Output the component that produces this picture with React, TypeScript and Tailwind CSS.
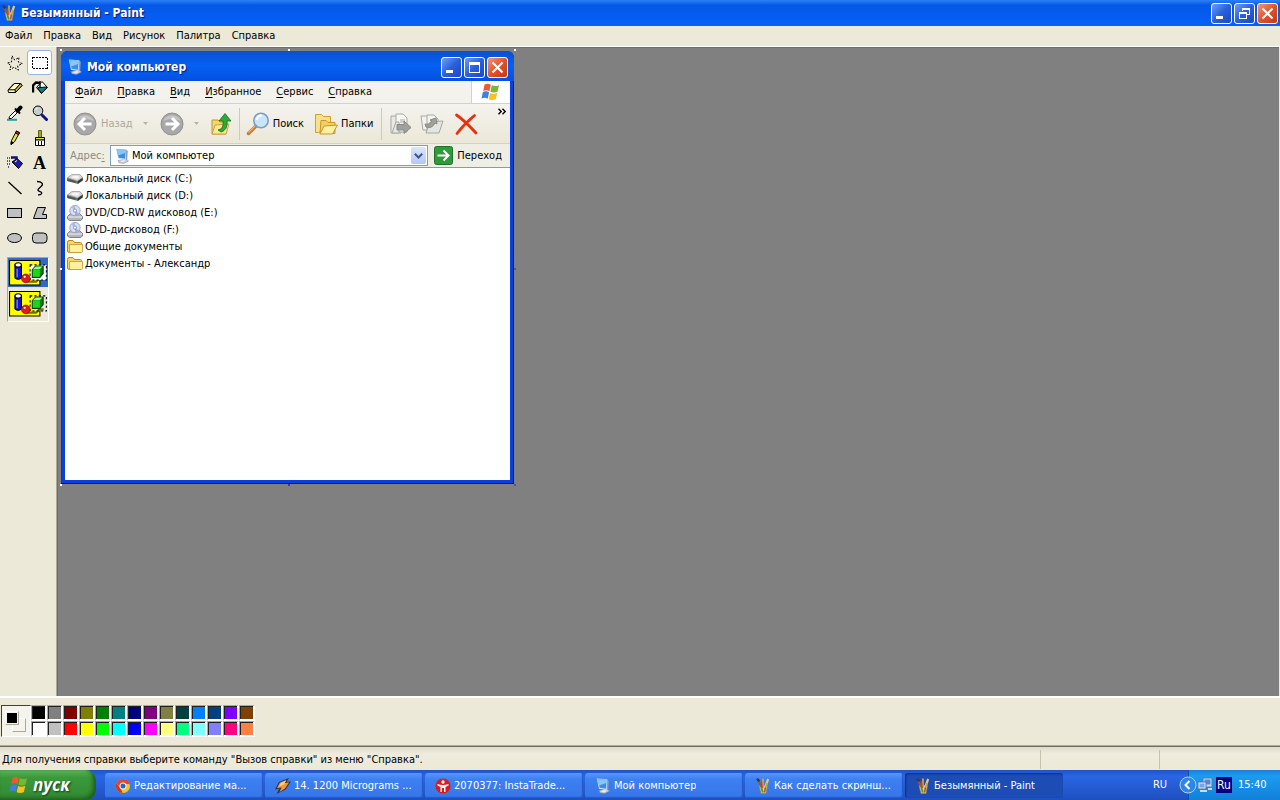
import React from 'react';

type IconProps = { className?: string };

const FONT = "font-['DejaVu_Sans_Condensed','Noto_Sans',sans-serif]";

const ComputerIcon = ({ className = 'h-4 w-4' }: IconProps) => (
  <svg viewBox="0 0 16 16" className={className} aria-hidden="true">
    <path d="M4 12.5 12 11l2.5 2-5 2.5-4.5-.8z" fill="#c9cfdb" stroke="#7b8498" strokeWidth=".5" />
    <path d="M12 1.5 13.8 3l-.6 8.5-2 1z" fill="#8f9ab2" />
    <path d="M1.8.5 12.3 1.2 11.7 12 4 10.8z" fill="#d7e9fb" />
    <path d="M2.6 1.2 11.6 1.8 11.1 10.8 4.6 9.8z" fill="#3a8ee8" />
    <path d="M2.6 1.2 11.6 1.8 11.3 5 4 7.5z" fill="#86c6fa" />
    <path d="m6 13 4-.8 1.5.8-3.5 1z" fill="#f4f6fa" />
  </svg>
);

const PaintIcon = ({ className = 'h-4 w-4' }: IconProps) => (
  <svg viewBox="0 0 16 16" className={className} aria-hidden="true">
    <path d="M4 7.5h8.5L11 15.5H6z" fill="#d9cfa8" stroke="#8f7f50" strokeWidth=".7" />
    <path d="M3 2.5 7 10" stroke="#9a5a30" strokeWidth="2" />
    <path d="M2 .8 4.4 3.4" stroke="#38384c" strokeWidth="2.4" />
    <path d="M8 .5v9" stroke="#e0a030" strokeWidth="1.8" />
    <path d="M6.4 3.5 7.2 10" stroke="#d83a28" strokeWidth="1.4" />
    <path d="M13.2 1 10.2 9" stroke="#e8c870" strokeWidth="2.2" />
    <path d="M12.2 5 10 11" stroke="#c8a820" strokeWidth="1.6" />
    <path d="m6.5 10 1.3 4.5" stroke="#4a9a38" strokeWidth="1.8" />
    <path d="m10.5 9.5-1 5" stroke="#c04a30" strokeWidth="1.5" />
  </svg>
);

const WindowsFlag = ({ className = 'h-5 w-5' }: IconProps) => (
  <svg viewBox="0 0 20 20" className={className} aria-hidden="true">
    <path d="M3.6 2.6C5.6 1.4 7.8 1.6 9.8 2.8L8.4 9.2C6.4 8 4.4 8 2.2 9z" fill="#ee5a28" />
    <path d="M10.8 3.3C13 4.4 15.4 4.4 18 3.2L16.6 9.6C14.2 10.8 11.6 10.8 9.4 9.7z" fill="#74b833" />
    <path d="M1.9 10.1C4 9 6.2 9.1 8.1 10.3L6.7 16.7C4.8 15.4 2.6 15.5.5 16.6z" fill="#3f7fe0" />
    <path d="M9.1 10.9C11.4 12 13.8 12 16.3 10.7L14.9 17C12.4 18.4 10 18.3 7.7 17.2z" fill="#fbc020" />
  </svg>
);

const FolderIcon = ({ className = 'h-4 w-4' }: IconProps) => (
  <svg viewBox="0 0 16 16" className={className} aria-hidden="true">
    <path d="M.5 3.500Q.5 1.500 2 1.500h4L7.500 3.500h6q1 0 1 1V12q0 1.500-1.500 1.500H2q-1.500 0-1.500-1.500z" fill="#f5d468" stroke="#b88a1c" />
    <path d="M2.500 5.500h13v7q0 1-1 1H2.500z" fill="#fdf0a0" stroke="#c8962a" strokeWidth=".8" />
  </svg>
);

const DiskIcon = ({ className = 'h-4 w-4' }: IconProps) => (
  <svg viewBox="0 0 16 16" className={className} aria-hidden="true">
    <path d="M0 7 5 3.5h8L16 6.5v3L11 13 0 10z" fill="#777" />
    <path d="M.5 6.8 5 3.5h7.5l3 3-4.8 3.4z" fill="#dcdcdc" stroke="#9c9c9c" strokeWidth=".6" />
    <path d="M4 6.500 6.500 4.800h4l2 1.400-2.500 1.500z" fill="#f6f6f6" />
    <path d="m.5 8 10 2.4v1.800L.5 10z" fill="#555" />
    <path d="m10.8 10.300 4.600-3.200v2.200l-4.600 3.400z" fill="#333" />
    <path d="M8.500 11h1.400" stroke="#4fd04f" />
  </svg>
);

const DiscIcon = ({ className = 'h-4 w-4' }: IconProps) => (
  <svg viewBox="0 0 16 16" className={className} aria-hidden="true">
    <path d="m.5 11.5 3-3h9l3 3V14l-2 1.500H2.500L.5 14z" fill="#b4b4bc" stroke="#6c6c74" strokeWidth=".8" />
    <path d="M1 12h14" stroke="#f4f4f8" />
    <circle cx="8" cy="5.600" r="5.200" fill="#d8def4" stroke="#8e94ac" strokeWidth=".8" />
    <path d="M8 5.600 4 2.200A5 5 0 0 1 8 .6z" fill="#a9bbf0" />
    <path d="m8 5.600 4 3.200a5 5 0 0 1-4 1.800z" fill="#9dace2" />
    <circle cx="8" cy="5.600" r="1.600" fill="#fff" stroke="#7a80a0" strokeWidth=".8" />
  </svg>
);

const ToolSvg = ({ children }: { children: React.ReactNode }) => (
  <svg viewBox="0 0 16 16" className="h-4 w-4" fill="none" stroke="#000" aria-hidden="true">
    {children}
  </svg>
);

const tools = [
  {
    name: 'Выделение произвольной области',
    icon: (
      <path d="M5 .8 7.6 5 12 2.5 11.3 7l4 1.6-4.6 2.2.6 4.4-4.2-3-4.3 2.7L4 10.5.5 8l4-1z" strokeDasharray="2 1.4" />
    ),
  },
  {
    name: 'Выделение',
    icon: <path d="M.5 2.5h15v11H.5z" strokeDasharray="2 1" shapeRendering="crispEdges" />,
  },
  {
    name: 'Ластик',
    icon: (
      <>
        <path d="m1 10 6-6.5h7l1 2L8.5 12.500H1.5z" fill="#ffff80" />
        <path d="m1.5 9.800 6-6.300h6L8 9.800z" fill="#fffccc" />
        <path d="m8 9.800.5 2.700 6.500-7-1.500-2z" fill="#c8c050" />
      </>
    ),
  },
  {
    name: 'Заливка',
    icon: (
      <>
        <path d="M1 12.500V5.5l3-3 4 .5" strokeWidth="2.4" />
        <path d="M4.5 7.5 10 1.5l5.5 6-6 6z" fill="#fff" />
        <path d="m5.5 7.800 8.500-.8 1 .8-5.500 5.400z" fill="#108080" />
        <path d="M8 1v6" strokeWidth="1.4" />
      </>
    ),
  },
  {
    name: 'Выбор цветов',
    icon: (
      <>
        <path d="M0 14.8h10" stroke="#20a0a0" strokeWidth="2" />
        <path d="m2 13.5.5-2 6-6 2 2-6 6z" fill="#fff" />
        <path d="m8 3.5 5 5" strokeWidth="2" />
        <path d="m10.5 6 3-3.500" strokeWidth="4" strokeLinecap="round" />
      </>
    ),
  },
  {
    name: 'Масштаб',
    icon: (
      <>
        <path d="m10 10 4.500 4.500" stroke="#101090" strokeWidth="3" strokeLinecap="round" />
        <circle cx="6" cy="5.8" r="4.8" fill="#c8ccd0" />
        <path d="M3.5 5q.5-2 2.500-2" stroke="#fff" />
      </>
    ),
  },
  {
    name: 'Карандаш',
    icon: (
      <>
        <path d="m4 14.5.5-4L9.500 1l3 1.800-5 9z" fill="#e8e040" />
        <path d="m8.500 3 3 1.700 1-2-3-1.700z" fill="#c03030" />
        <path d="m4 14.500.3-3 2.200 1.200z" fill="#000" />
      </>
    ),
  },
  {
    name: 'Кисть',
    icon: (
      <>
        <path d="M6.500.5h3v7h-3z" fill="#a8a838" stroke="#606010" />
        <path d="M3.500 7.500h9v2.500h-9z" fill="#e8e060" />
        <path d="M3.500 10h9v5.500h-9z" fill="#fff" />
        <path d="M6.500 11v4M9.500 11v4" />
      </>
    ),
  },
  {
    name: 'Распылитель',
    icon: (
      <>
        <path d="M0 3h5M0 6h4M0 9h3M1 12h2" stroke="#2020a0" strokeWidth="1.5" strokeDasharray="1 1" />
        <path d="m5 7 5-3.500 5.500 5-4 5z" fill="#1c1ca8" />
        <path d="M4 2.500h5.500v3" stroke="#101080" strokeWidth="2.500" />
        <path d="m8 7 2-1.500" stroke="#fff" />
      </>
    ),
  },
  { name: 'Надпись', icon: null },
  { name: 'Линия', icon: <path d="m1.500 2 13 12" strokeWidth="1.300" /> },
  { name: 'Кривая', icon: <path d="M5 1.500c5 0 7 2.500 4 5s-5 4 0 5.500c1.500 1 .5 3-3 2.800" strokeWidth="1.300" /> },
  { name: 'Прямоугольник', icon: <path d="M.5 3.500h14v9H.5z" fill="#c0c0c0" shapeRendering="crispEdges" /> },
  { name: 'Многоугольник', icon: <path d="M5.500 2.500h8l-3 7h4v4h-13z" fill="#c0c0c0" /> },
  { name: 'Эллипс', icon: <ellipse cx="7.500" cy="8" rx="7" ry="4.500" fill="#c0c0c0" /> },
  { name: 'Скругленный прямоугольник', icon: <rect x=".5" y="3" width="14.500" height="10" rx="3.500" fill="#c0c0c0" /> },
];

const SelectionModeIcon = ({ opaque }: { opaque: boolean }) => (
  <svg viewBox="0 0 36 24" className="h-[26px] w-[39px]" aria-hidden="true">
    <path d="M.5.5h28v22.500H.5z" fill="#ff0" stroke="#000" />
    <path d="M5.500 4.500v12q3 2.500 6 0v-12z" fill="#1414d0" stroke="#000" />
    <ellipse cx="8.500" cy="4.500" rx="3" ry="2" fill="#fff" stroke="#000" />
    <path d="M7.500 8v8" stroke="#90a0ff" />
    <path d="M16 20h9l3-3h4" stroke="#707010" strokeWidth="2" fill="none" />
    <path d="M19.500 4.500h15v14h-15z" fill={opaque ? '#fff' : 'none'} stroke="#000" strokeDasharray="2 2" />
    <circle cx="15.500" cy="17" r="4" fill="#e81818" stroke="#800" strokeWidth=".6" />
    <circle cx="14.500" cy="15.500" r="1" fill="#fff" />
    <path d="m21.500 9 3-3.500h7v7l-3 3.500h-7z" fill="#108010" stroke="#043c04" />
    <path d="M22 9h6.500v6.500H22z" fill="#18d818" />
    <path d="m22 8.500 2.800-2.500h6l-2.500 2.500z" fill="#90ff90" />
  </svg>
);

const palette = [
  ['bg-black', 'bg-[#808080]', 'bg-[#800000]', 'bg-[#808000]', 'bg-[#008000]', 'bg-[#008080]', 'bg-[#000080]', 'bg-[#800080]', 'bg-[#808040]', 'bg-[#004040]', 'bg-[#0080ff]', 'bg-[#004080]', 'bg-[#8000ff]', 'bg-[#804000]'],
  ['bg-white', 'bg-[#c0c0c0]', 'bg-[#ff0000]', 'bg-[#ffff00]', 'bg-[#00ff00]', 'bg-[#00ffff]', 'bg-[#0000ff]', 'bg-[#ff00ff]', 'bg-[#ffff80]', 'bg-[#00ff80]', 'bg-[#80ffff]', 'bg-[#8080ff]', 'bg-[#ff0080]', 'bg-[#ff8040]'],
];

const drives = [
  { name: 'Локальный диск (C:)', icon: DiskIcon },
  { name: 'Локальный диск (D:)', icon: DiskIcon },
  { name: 'DVD/CD-RW дисковод (E:)', icon: DiscIcon },
  { name: 'DVD-дисковод (F:)', icon: DiscIcon },
  { name: 'Общие документы', icon: FolderIcon },
  { name: 'Документы - Александр', icon: FolderIcon },
];

const BrowserIcon = ({ className = 'h-4 w-4' }: IconProps) => (
  <svg viewBox="0 0 16 16" className={className} aria-hidden="true">
    <circle cx="8" cy="8" r="7" fill="#f6c21c" />
    <path d="M1.500 5.500A7 7 0 0 1 14.800 6H8a3 3 0 0 0-2.800 3z" fill="#e8432c" />
    <path d="M1.500 5.200 6 11l1.500 4A7 7 0 0 1 1.500 5.200z" fill="#d8341f" />
    <circle cx="8" cy="8" r="3.500" fill="#fff" />
    <circle cx="8" cy="8" r="2.500" fill="#2c62c8" />
  </svg>
);

const WinampIcon = ({ className = 'h-4 w-4' }: IconProps) => (
  <svg viewBox="0 0 16 16" className={className} aria-hidden="true">
    <path d="M14 0 4 4 0 11.500l4.500-1L1.500 16l9-4.500L16 3.500l-4.500.5z" fill="#333" />
    <path d="M11.500 2 5 4.500 2 10l4.500-.5-2 4.500 5.500-3.500 4-6-4.500.5z" fill="#f2963a" />
    <path d="M11 2.500 6 5 4 8.500l5-2z" fill="#ffd08a" />
  </svg>
);

const InstaIcon = ({ className = 'h-4 w-4' }: IconProps) => (
  <svg viewBox="0 0 16 16" className={className} aria-hidden="true">
    <circle cx="8" cy="8" r="7.500" fill="#e01818" />
    <circle cx="8" cy="4" r="1.700" fill="#fff" />
    <path d="M2.500 6Q8 8 13.500 6v1.500L10.500 9v5H9v-4H7v4H5.500V9l-3-1.500z" fill="#fff" />
  </svg>
);

const tasks = [
  { title: 'Редактирование ма...', icon: BrowserIcon, active: false },
  { title: '14. 1200 Micrograms ...', icon: WinampIcon, active: false },
  { title: '2070377: InstaTrade...', icon: InstaIcon, active: false },
  { title: 'Мой компьютер', icon: ComputerIcon, active: false },
  { title: 'Как сделать скринш...', icon: PaintIcon, active: false },
  { title: 'Безымянный - Paint', icon: PaintIcon, active: true },
];

const WindowButtons = ({ restored }: { restored: boolean }) => (
  <div className="flex gap-[2px]">
    <button aria-label="Свернуть" className="h-[21px] w-[21px] rounded-[3px] border border-white bg-linear-to-br from-[#6f9cf5] via-[#2a5fdc] to-[#1d48c4]">
      <svg viewBox="0 0 19 19" className="h-full w-full">
        <path d="M4 12h7v3H4z" fill="#fff" />
      </svg>
    </button>
    <button aria-label={restored ? 'Развернуть' : 'Восстановить'} className="h-[21px] w-[21px] rounded-[3px] border border-white bg-linear-to-br from-[#6f9cf5] via-[#2a5fdc] to-[#1d48c4]">
      <svg viewBox="0 0 19 19" className="h-full w-full" fill="none" stroke="#fff" shapeRendering="crispEdges">
        {restored ? (
          <>
            <path d="M4.500 5.500h10v9h-10z" />
            <path d="M4 5h11" strokeWidth="3" />
          </>
        ) : (
          <>
            <path d="M7.500 7V4.500h7v6H12" />
            <path d="M7 4.500h8" strokeWidth="2" />
            <path d="M4.500 8.500h7v6h-7z" />
            <path d="M4 8.500h8" strokeWidth="2" />
          </>
        )}
      </svg>
    </button>
    <button aria-label="Закрыть" className="h-[21px] w-[21px] rounded-[3px] border border-white bg-linear-to-br from-[#f0957a] via-[#e0532c] to-[#c03a10]">
      <svg viewBox="0 0 19 19" className="h-full w-full">
        <path d="m4.500 4.500 10 10m0-10-10 10" stroke="#fff" strokeWidth="2.200" />
      </svg>
    </button>
  </div>
);

const NavArrow = ({ flip }: { flip: boolean }) => (
  <svg viewBox="0 0 24 24" className="h-6 w-6" aria-hidden="true">
    <circle cx="12" cy="12" r="11" fill="#a8a8a8" stroke="#909090" />
    <path d="M3 9A10 10 0 0 1 21 9Q12 5 3 9z" fill="#c4c4c4" />
    <path
      d={flip ? 'M5.500 12h12M12 6l6 6-6 6' : 'M18.500 12h-12M12 6l-6 6 6 6'}
      fill="none"
      stroke="#fff"
      strokeWidth="3"
    />
  </svg>
);

const DropArrow = () => (
  <svg viewBox="0 0 5 3" className="h-[3px] w-[5px]" aria-hidden="true">
    <path d="M0 0h5L2.500 3z" fill="#b4b4a8" />
  </svg>
);

const explorerMenu = [
  ['Ф', 'айл'],
  ['П', 'равка'],
  ['В', 'ид'],
  ['И', 'збранное'],
  ['С', 'ервис'],
  ['С', 'правка'],
];

const ExplorerWindow = () => (
  <div className="flex h-[433px] w-[453px] flex-col rounded-t-[7px] bg-[#0a3fdc] px-1 pb-1 shadow-[inset_-1px_-1px_0_#00138c,inset_1px_0_0_#0831d9]">
    <div className="-mx-1 flex h-[30px] shrink-0 items-center rounded-t-[7px] bg-linear-to-b from-[#0a50d0] via-[#0560f4] to-[#0450e0] px-[6px] pt-[2px]">
      <ComputerIcon />
      <h2 className="ml-1 flex-1 text-xs font-bold text-white [text-shadow:1px_1px_1px_#0a1883]">Мой компьютер</h2>
      <WindowButtons restored />
    </div>
    <div className="flex h-[23px] shrink-0 border-b border-[#d8d2bd] bg-[#f3f2ec]">
      <nav className="flex flex-1 items-center gap-[15px] pl-[10px]">
        {explorerMenu.map(([key, rest]) => (
          <button key={key + rest}>
            <span className="underline underline-offset-2">{key}</span>
            {rest}
          </button>
        ))}
      </nav>
      <div className="flex w-[39px] items-center justify-center border-l border-[#d8d2bd] bg-white">
        <WindowsFlag />
      </div>
    </div>
    <div className="relative flex h-10 shrink-0 items-center border-b border-[#d8d2bd] bg-linear-to-b from-[#f4f3ee] to-[#ebe8d8] pl-2">
      <button className="flex items-center gap-1 text-[#aca899]">
        <NavArrow flip={false} />
        Назад
      </button>
      <span className="ml-[10px]"><DropArrow /></span>
      <button aria-label="Вперед" className="ml-3"><NavArrow flip /></button>
      <span className="ml-[10px]"><DropArrow /></span>
      <button aria-label="Вверх" className="ml-[10px]">
        <svg viewBox="0 0 24 24" className="h-6 w-6" aria-hidden="true">
          <path d="M3 8h6l2 2h7l-1 12H3z" fill="#f5d76e" stroke="#c0982c" />
          <path d="m3 22 3-9 14-1-3 10z" fill="#fbe998" stroke="#c8a23a" />
          <path d="M9 18q6-1 5-9h-4l6-7.500L22 9h-4q1 9-6 11z" fill="#2fa836" stroke="#14701c" strokeWidth=".8" />
        </svg>
      </button>
      <span className="mx-[6px] h-8 w-px bg-[#cfcbb8]" />
      <button className="flex items-center gap-[3px]">
        <svg viewBox="0 0 24 24" className="h-6 w-6" aria-hidden="true">
          <path d="m9.500 14.500-7 7" stroke="#c87a38" strokeWidth="3.500" strokeLinecap="round" />
          <path d="m9 14-6.500 6.500" stroke="#f0b070" strokeWidth="1.200" />
          <circle cx="15" cy="8.500" r="7.200" fill="#c8e6fb" stroke="#7c9cc8" strokeWidth="1.600" />
          <path d="M10.500 8q1-4.500 5-4.500" stroke="#fff" strokeWidth="2" fill="none" />
        </svg>
        Поиск
      </button>
      <button className="ml-[10px] flex items-center gap-[3px]">
        <svg viewBox="0 0 24 24" className="h-6 w-6" aria-hidden="true">
          <path d="M1.500 2.500h6l2 2h7v13l-12 3h-3z" fill="#f9e08a" stroke="#d0a030" />
          <path d="M7 8.500h5l2 2h7v11H6z" fill="#f5d060" stroke="#c8962a" />
          <path d="m6 22 4-8 13.500-1-5 9z" fill="#fdf0a0" stroke="#c8962a" />
        </svg>
        Папки
      </button>
      <span className="mx-2 h-8 w-px bg-[#cfcbb8]" />
      <button aria-label="Переместить в">
        <svg viewBox="0 0 24 24" className="h-6 w-6" fill="#e8e8e4" stroke="#a8a8a4" aria-hidden="true">
          <path d="M1 4h5l2 2h3v15H1z" />
          <path d="M6 2h7l4 4v14H6z" fill="#f6f6f4" />
          <path d="M2 21 6 10h3v11zM10 8h5M10 10h5" />
          <path d="M7 12.500h7V9l7 6.500-7 6V18H7z" fill="#a0a09c" stroke="#888884" />
        </svg>
      </button>
      <button aria-label="Копировать в" className="ml-[6px]">
        <svg viewBox="0 0 24 24" className="h-6 w-6" fill="#f2f2ef" stroke="#a8a8a4" aria-hidden="true">
          <path d="M1 4h9l3 3v11H3z" />
          <path d="M7 3h7l4 4v13H7z" />
          <path d="m6 21 4-11 13-1-4 12z" fill="#e4e4e0" />
          <path d="M5 12q5 1 7-3l-2-1 6-2 1 6-2-1q-3 6-9 4z" fill="#a0a09c" stroke="#888884" />
        </svg>
      </button>
      <button aria-label="Удалить" className="ml-[10px]">
        <svg viewBox="0 0 24 24" className="h-6 w-6" aria-hidden="true">
          <path d="M2.500 3Q10 8 22 21M20.500 3.500Q11 11 3 21.500" stroke="#e8300c" strokeWidth="2.800" strokeLinecap="round" fill="none" />
        </svg>
      </button>
      <button aria-label="Другие кнопки" className="absolute top-1 right-1">
        <svg viewBox="0 0 8 7" className="h-[7px] w-2" fill="none" stroke="#000" strokeWidth="1.400">
          <path d="m.5.800 2.700 2.700L.5 6.200M4.500.800l2.700 2.700-2.700 2.700" />
        </svg>
      </button>
    </div>
    <div className="flex h-[23px] shrink-0 items-center bg-[#efeee4] pl-[5px]">
      <label htmlFor="address" className="w-10 text-[#8c8a7c]">
        Адрес<span className="underline underline-offset-2">:</span>
      </label>
      <div className="flex h-[21px] flex-1 items-center border border-[#7f9db9] bg-white pl-[3px]">
        <ComputerIcon />
        <select id="address" className="h-full flex-1 appearance-none bg-transparent pl-[2px] outline-none">
          <option>Мой компьютер</option>
        </select>
        <span className="pointer-events-none mr-px flex h-[17px] w-[15px] items-center justify-center rounded-[2px] bg-linear-to-b from-[#dbe5fd] to-[#b3c7f8]">
          <svg viewBox="0 0 9 6" className="h-[6px] w-[9px]" fill="none" stroke="#3d5587" strokeWidth="2">
            <path d="m.8.800 3.700 3.700L8.200.800" />
          </svg>
        </span>
      </div>
      <button className="ml-[6px] flex items-center gap-1 pr-2">
        <svg viewBox="0 0 19 19" className="h-[19px] w-[19px]" aria-hidden="true">
          <rect x=".5" y=".5" width="18" height="18" rx="2" fill="#2f9a3a" stroke="#1c7426" />
          <path d="M3.500 9.500h11M9.500 4.500l5 5-5 5" fill="none" stroke="#fff" strokeWidth="2" />
        </svg>
        Переход
      </button>
    </div>
    <ul className="flex-1 border-t border-[#7f9db9] bg-white pt-[2px] pl-[2px]">
      {drives.map((drive) => (
        <li key={drive.name} className="flex h-[17px] items-center">
          <drive.icon />
          <span className="ml-[2px]">{drive.name}</span>
        </li>
      ))}
    </ul>
  </div>
);

const Taskbar = () => (
  <footer className="flex h-[30px] shrink-0 bg-linear-to-b from-[#1f52c8] via-[#2a66e4] via-20% to-[#1f4fc0] text-white">
    <button className="flex w-24 items-center rounded-r-[10px] bg-linear-to-b from-[#5db25d] via-[#3a993a] via-25% to-[#338a33] pl-[9px] shadow-[inset_-3px_-2px_4px_#1d5e1d]">
      <WindowsFlag />
      <span className="ml-1 font-['Open_Sans',sans-serif] text-[17px] font-bold italic [text-shadow:1px_1px_2px_#143c14]">пуск</span>
    </button>
    <div className="ml-[9px] flex min-w-0 flex-1 items-stretch gap-[2px] pt-[3px] pb-[2px]">
      {tasks.map((task) => (
        <button
          key={task.title}
          className={
            task.active
              ? 'flex w-[158px] items-center rounded-[3px] bg-[#1c4cb4] pl-[10px] shadow-[inset_1px_1px_2px_#0e2f80]'
              : 'flex w-[158px] items-center rounded-[3px] bg-linear-to-b from-[#5a96fa] via-[#3c80f2] via-25% to-[#3675e8] pl-[10px] shadow-[inset_-1px_-1px_1px_#2358c8]'
          }
        >
          <task.icon />
          <span className="ml-[3px] truncate">{task.title}</span>
        </button>
      ))}
    </div>
    <span className="self-center pr-[21px]">RU</span>
    <div className="relative flex w-[92px] items-center border-l border-[#0d4fb0] bg-linear-to-b from-[#1c7fdc] via-[#1a9cf0] via-20% to-[#1280d8] pl-2">
      <button aria-label="Показать скрытые значки" className="absolute -left-[10px]">
        <svg viewBox="0 0 18 18" className="h-[18px] w-[18px]">
          <circle cx="9" cy="9" r="8" fill="#2f86ea" stroke="#a8d4fa" />
          <path d="M10.500 5 6.500 9l4 4" fill="none" stroke="#fff" strokeWidth="2" />
        </svg>
      </button>
      <svg viewBox="0 0 16 16" className="h-4 w-4" aria-hidden="true">
        <path d="M6 1h9v9H6z" fill="#c8dcf4" stroke="#5878a8" />
        <path d="M7.500 2.500h6v5h-6z" fill="#4c8ce0" />
        <path d="M1 5h8v7H1z" fill="#dce8f6" stroke="#5878a8" />
        <path d="M2.500 6.500h5v4h-5z" fill="#6ca8ec" />
        <path d="M3 14h7M11 12h4" stroke="#d0d8e4" strokeWidth="2" />
      </svg>
      <span className="ml-[3px] flex h-4 w-4 items-center justify-center bg-[#000080] text-xs">Ru</span>
      <time className="ml-[6px]">15:40</time>
    </div>
  </footer>
);

const App = () => (
  <div className={`flex h-screen flex-col overflow-hidden bg-[#ece9d8] text-[11px] leading-[14px] text-black ${FONT}`}>
    <header className="flex h-[26px] shrink-0 items-center bg-linear-to-b from-[#2a80f8] via-[#0458e6] via-20% to-[#0560fa] pr-[2px] pl-px">
      <PaintIcon />
      <h1 className="ml-1 flex-1 text-xs font-bold text-white [text-shadow:1px_1px_1px_#0a1883]">Безымянный - Paint</h1>
      <WindowButtons restored={false} />
    </header>
    <nav className="flex h-5 shrink-0 items-center gap-[11px] pl-[5px]">
      {['Файл', 'Правка', 'Вид', 'Рисунок', 'Палитра', 'Справка'].map((item) => (
        <button key={item}>{item}</button>
      ))}
    </nav>

    <main className="flex min-h-0 flex-1 border-t border-white pr-px">
      <aside className="w-[57px] shrink-0 border-r border-[#aca899] pt-[3px] pl-[2px]">
        <div className="grid w-[50px] grid-cols-2">
          {tools.map((tool) => (
            <button
              key={tool.name}
              aria-label={tool.name}
              className={
                tool.name === 'Выделение'
                  ? 'flex h-[25px] w-[25px] items-center justify-center rounded-[3px] border border-[#98b5e2] bg-white'
                  : 'flex h-[25px] w-[25px] items-center justify-center'
              }
            >
              {tool.icon ? (
                <ToolSvg>{tool.icon}</ToolSvg>
              ) : (
                <span className="font-['Liberation_Serif',serif] text-lg leading-4 font-bold">A</span>
              )}
            </button>
          ))}
        </div>
        <div className="mt-[7px] ml-[5px] h-[65px] w-[42px] border border-t-[#aca899] border-r-white border-b-white border-l-[#aca899]">
          <button aria-label="Непрозрачный фон" className="flex h-[29px] w-full items-center justify-center bg-[#316ac5]">
            <SelectionModeIcon opaque />
          </button>
          <button aria-label="Прозрачный фон" className="flex h-[34px] w-full items-center justify-center">
            <SelectionModeIcon opaque={false} />
          </button>
        </div>
      </aside>
      <section className="min-w-0 flex-1 border-t border-l border-[#716f64] bg-[#808080] pt-px pl-[2px]">
        <div className="relative w-fit p-px pt-[2px] pr-[2px] pb-[2px]">
          <ExplorerWindow />
          <span className="absolute top-0 left-0 h-[2px] w-[2px] bg-white" />
          <span className="absolute top-0 left-1/2 h-[2px] w-[2px] bg-white" />
          <span className="absolute top-0 right-0 h-[2px] w-[2px] bg-white" />
          <span className="absolute top-1/2 left-0 h-[2px] w-[2px] bg-white" />
          <span className="absolute top-1/2 right-0 h-[2px] w-[2px] bg-[#4a5a98]" />
          <span className="absolute bottom-0 left-0 h-[2px] w-[2px] bg-white" />
          <span className="absolute bottom-0 left-1/2 h-[2px] w-[2px] bg-[#2440b0]" />
          <span className="absolute right-0 bottom-0 h-[2px] w-[2px] bg-[#4a5a98]" />
        </div>
      </section>
    </main>

    <section className="h-[50px] shrink-0 border-t-2 border-b border-t-white border-b-[#aca899] pt-[7px] pl-px">
      <div className="flex">
        <div className="relative h-8 w-[30px] border border-t-[#404040] border-r-white border-b-white border-l-[#404040] bg-[#f4f3ec]">
          <span className="absolute top-3 left-[10px] h-[14px] w-[14px] border border-t-white border-r-[#aca899] border-b-[#aca899] border-l-white bg-[#f4f3ec]" />
          <span className="absolute top-[5px] left-[3px] h-[14px] w-[14px] border border-t-white border-r-[#aca899] border-b-[#aca899] border-l-white bg-black bg-clip-content p-px" />
        </div>
        <div className="flex flex-col">
          {palette.map((row) => (
            <div key={row[0]} className="flex">
              {row.map((color) => (
                <button
                  key={color}
                  aria-label={color}
                  className={`h-4 w-4 border-t border-r-2 border-b-2 border-l border-t-[#aca899] border-r-white border-b-white border-l-[#aca899] shadow-[inset_1px_1px_0_#202020] ${color}`}
                />
              ))}
            </div>
          ))}
        </div>
      </div>
    </section>

    <div className="flex h-6 shrink-0 items-stretch border-t border-[#716f64] bg-linear-to-b from-[#dedbc9] via-[#efecde] via-30% to-[#ece9d8]">
      <p className="flex flex-1 items-center pt-[2px] pl-[2px]">
        Для получения справки выберите команду "Вызов справки" из меню "Справка".
      </p>
      <span className="mt-[3px] mb-px w-[119px] border-l border-[#c5c2b0]" />
      <span className="mt-[3px] mb-px w-[121px] border-l border-[#c5c2b0]" />
    </div>
    <Taskbar />
  </div>
);

export default App;
